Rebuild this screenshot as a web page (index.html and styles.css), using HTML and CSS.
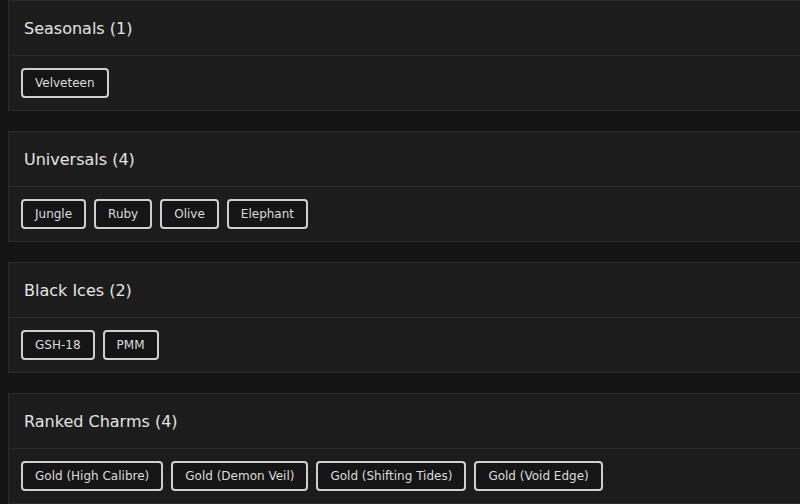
FILE: index.html
```html
<!DOCTYPE html>
<html lang="en">
<head>
<meta charset="UTF-8">
<title>Collection</title>
<link rel="stylesheet" href="styles.css">
</head>
<body>

<!-- Seasonals -->
<div class="card">
  <div class="card-header">Seasonals (1)</div>
  <div class="card-body">
    <span class="tag">Velveteen</span>
  </div>
</div>

<!-- Universals -->
<div class="card">
  <div class="card-header">Universals (4)</div>
  <div class="card-body">
    <span class="tag">Jungle</span>
    <span class="tag">Ruby</span>
    <span class="tag">Olive</span>
    <span class="tag">Elephant</span>
  </div>
</div>

<!-- Black Ices -->
<div class="card">
  <div class="card-header">Black Ices (2)</div>
  <div class="card-body">
    <span class="tag">GSH-18</span>
    <span class="tag">PMM</span>
  </div>
</div>

<!-- Ranked Charms -->
<div class="card">
  <div class="card-header">Ranked Charms (4)</div>
  <div class="card-body">
    <span class="tag">Gold (High Calibre)</span>
    <span class="tag">Gold (Demon Veil)</span>
    <span class="tag">Gold (Shifting Tides)</span>
    <span class="tag">Gold (Void Edge)</span>
  </div>
</div>

</body>
</html>
```

FILE: styles.css
```css
/* Page */
body {
  margin: 0;
  padding: 0 0 0 8px;
  background-color: #141414;
  font-family: "DejaVu Sans", sans-serif;
  color: #e2e2e2;
  overflow: hidden;
}

/* Card styles */
.card {
  width: 810px;
  background-color: #1c1c1c;
  border: 1px solid #2b2b2b;
  margin-bottom: 20px;
}

.card-header {
  height: 54px;
  display: flex;
  align-items: center;
  padding-left: 15px;
  font-size: 16px;
  font-weight: 500;
  color: #e4e4e4;
  border-bottom: 1px solid #2b2b2b;
}

.card-body {
  display: flex;
  gap: 8px;
  padding: 12px;
}

/* Tag styles */
.tag {
  display: inline-flex;
  align-items: center;
  height: 26px;
  padding: 0 12px;
  border: 2px solid #cfcfcf;
  border-radius: 4px;
  background-color: #151515;
  font-size: 12px;
  color: #dcdcdc;
}
```
